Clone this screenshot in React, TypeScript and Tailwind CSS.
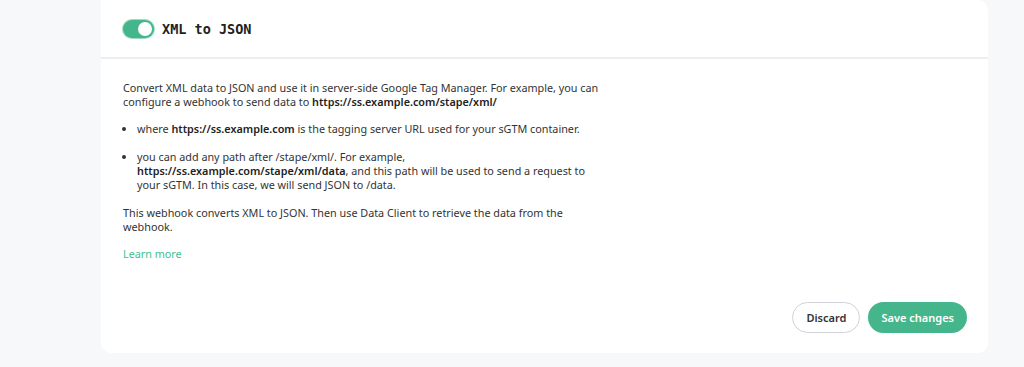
export default function App() {
  return (
    <div className="min-h-[367px] w-full bg-[#f7f8fa] pl-[101px] pr-[36px]" style={{ fontFamily: '"Noto Sans", sans-serif' }}>
      <div className="flex h-[353px] flex-col rounded-b-[10px] rounded-tr-[10px] bg-white">
        <div className="flex h-[59px] items-center gap-2 border-b-2 border-[#eeeeef] pl-[22px] pt-[1px]">
          <span className="relative inline-flex h-[18px] w-[31px] items-center rounded-full bg-[#45b68b] ring-1 ring-[#9fdcc4]">
            <span className="absolute right-[2px] h-[14px] w-[14px] rounded-full bg-white" />
          </span>
          <span className="text-[13.5px] font-bold text-[#222]" style={{ fontFamily: '"DejaVu Sans Mono", monospace' }}>
            XML to JSON
          </span>
        </div>
        <div className="flex flex-1 flex-col px-[22px] pt-[22px] pb-[20px] text-[10.8px] leading-[14px] text-[#333]">
          <div className="max-w-[478px]">
            <p>
              Convert XML data to JSON and use it in server-side Google Tag Manager. For example, you can configure a webhook to send data to{' '}
              <b className="font-semibold text-[#222]">https://ss.example.com/stape/xml/</b>
            </p>
            <ul className="mt-[13px] flex flex-col gap-[14px] pl-[14px]">
              <li className="list-disc">
                where <b className="font-semibold text-[#222]">https://ss.example.com</b> is the tagging server URL used for your sGTM container.
              </li>
              <li className="list-disc">
                you can add any path after /stape/xml/. For example, <b className="font-semibold text-[#222]">https://ss.example.com/stape/xml/data</b>, and this path will be used to send a request to your sGTM. In this case, we will send JSON to /data.
              </li>
            </ul>
            <p className="mt-[14px]">
              This webhook converts XML to JSON. Then use Data Client to retrieve the data from the webhook.
            </p>
            <a className="mt-[13px] block text-[#3fbf8f]">Learn more</a>
          </div>
          <div className="mt-auto flex justify-end gap-2 pr-[-1px]">
            <button className="h-[31px] rounded-full border border-[#cfd3d8] px-[13px] text-[11px] font-semibold text-[#333]">Discard</button>
            <button className="mr-[-1px] h-[31px] rounded-full bg-[#45b68b] px-[13px] text-[11px] font-semibold text-white">Save changes</button>
          </div>
        </div>
      </div>
    </div>
  )
}
